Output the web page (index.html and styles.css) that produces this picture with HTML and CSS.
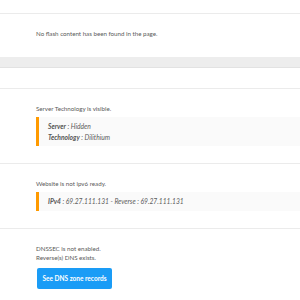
FILE: index.html
```html
<!DOCTYPE html>
<html>
<head>
<meta charset="utf-8">
<link rel="stylesheet" href="styles.css">
</head>
<body>
<div class="section top"></div>
<div class="section s1">
  <p class="msg">No flash content has been found in the page.</p>
</div>
<div class="band"></div>
<div class="section empty"></div>
<div class="section s3">
  <p class="msg">Server Technology is visible.</p>
  <div class="box two">
    <div class="row"><b>Server</b> : Hidden</div>
    <div class="row"><b>Technology</b> : Dilithium</div>
  </div>
</div>
<div class="section s4">
  <p class="msg">Website is not ipv6 ready.</p>
  <div class="box one">
    <div class="row"><b>IPv4</b> : 69.27.111.131 - Reverse : 69.27.111.131</div>
  </div>
</div>
<div class="section s5">
  <p class="msg">DNSSEC is not enabled.</p>
  <p class="msg">Reverse(s) DNS exists.</p>
  <button class="btn">See DNS zone records</button>
</div>
</body>
</html>
```
FILE: styles.css
```css
html, body {
  margin: 0;
  padding: 0;
  background: #fff;
}
body {
  font-family: Lato, "Open Sans", sans-serif;
  font-size: 6.2px;
  color: #5a5a5a;
  width: 300px;
}
.section {
  border-bottom: 1px solid #ebebeb;
  padding-left: 36px;
}
.top {
  height: 13px;
}
.s1 {
  padding-top: 15px;
  padding-bottom: 19px;
  border-bottom: none;
}
.band {
  height: 10px;
  background: #ededed;
  border-bottom: 1px solid #e2e2e2;
}
.empty {
  height: 20px;
}
.msg {
  margin: 0;
  line-height: 9px;
}
.s3, .s4, .s5 {
  padding-top: 15px;
}
.s3, .s4 {
  padding-bottom: 17px;
}
.s5 {
  border-bottom: none;
}
.box {
  margin-top: 4px;
  background: #fafafa;
  border-left: 3px solid #ff9a00;
  padding-left: 9px;
  font-style: italic;
  font-size: 6.7px;
}
.box b {
  font-weight: 700;
  color: #555;
}
.row {
  line-height: 11px;
}
.two {
  padding-top: 4px;
  padding-bottom: 3px;
}
.one {
  padding-top: 4px;
  padding-bottom: 4px;
}
.btn {
  display: block;
  margin-top: 6px;
  margin-left: 1px;
  width: 75px;
  height: 21px;
  padding: 0;
  border: none;
  border-radius: 2px;
  background: #1a9cf6;
  color: #fff;
  font-family: Lato, sans-serif;
  font-size: 6.5px;
  font-weight: 700;
}
```
